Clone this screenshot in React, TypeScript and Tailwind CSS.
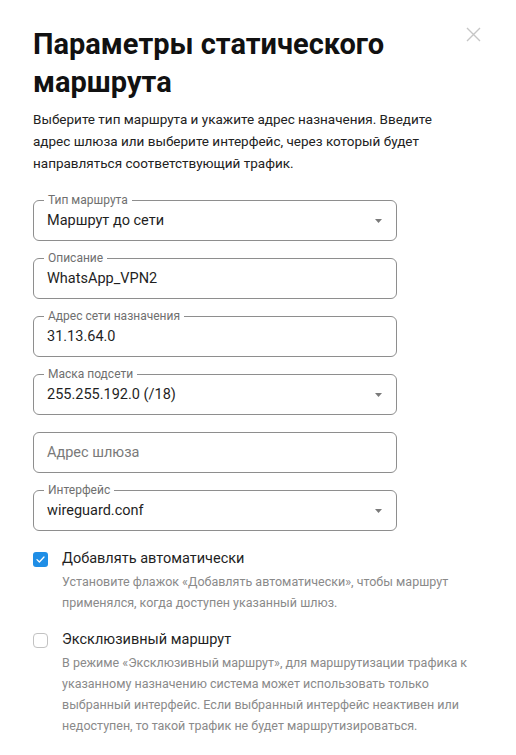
import React from "react";

type FieldProps = {
    label?: string;
    value?: string;
    placeholder?: string;
    select?: boolean;
};

function Field({ label, value, placeholder, select }: FieldProps) {
    return (
        <div className="relative flex h-[41px] w-[364px] items-center rounded-[6px] border border-[#8e8e8e] pl-[13px] pr-[12px]">
            {label && (
                <span className="absolute -top-[9px] left-[10px] bg-white px-[4px] text-[12px] leading-[16px] text-[#6f6f6f]">
                    {label}
                </span>
            )}
            <span className={"flex-1 text-[14.5px] " + (value ? "text-[#1f1f1f]" : "text-[#7a7a7a]")}>
                {value ?? placeholder}
            </span>
            {select && (
                <svg width="7" height="4" viewBox="0 0 7 4" className="mr-[2px]">
                    <path d="M0 0 L7 0 L3.5 4 Z" fill="#7a7a7a" />
                </svg>
            )}
        </div>
    );
}

function CheckRow({ checked, title, text }: { checked: boolean; title: string; text: string }) {
    return (
        <div className="flex flex-col">
            <div className="flex items-center gap-[14px]">
                {checked ? (
                    <span className="flex h-[15px] w-[15px] items-center justify-center rounded-[3px] bg-[#1f8ee6]">
                        <svg width="9" height="7" viewBox="0 0 9 7">
                            <path d="M1 3.6 L3.4 6 L8 1" fill="none" stroke="white" strokeWidth="1.3" strokeLinecap="round" strokeLinejoin="round" />
                        </svg>
                    </span>
                ) : (
                    <span className="h-[15px] w-[15px] rounded-[4px] border border-[#c2c2c2]" />
                )}
                <span className="text-[14.5px] leading-[22px] text-[#1f1f1f]">{title}</span>
            </div>
            <p className="ml-[29px] mt-[1px] text-[12.5px] leading-[21px] text-[#8a8a8a]">{text}</p>
        </div>
    );
}

export default function App() {
    return (
        <div className="relative min-h-[755px] w-[516px] bg-white px-[33px] pt-[25px] font-['Roboto',sans-serif]">
            {/* закрыть */}
            <button className="absolute right-[35px] top-[27px] p-0">
                <svg width="15" height="15" viewBox="0 0 15 15">
                    <path d="M1 1 L14 14 M14 1 L1 14" stroke="#c6c6c6" strokeWidth="1.4" />
                </svg>
            </button>

            <h1 className="text-[29px] font-bold leading-[38px] text-[#111]">
                Параметры статического
                <br />
                маршрута
            </h1>
            <p className="mt-[7px] max-w-[435px] text-[13.5px] leading-[22px] text-[#222]">
                Выберите тип маршрута и укажите адрес назначения. Введите адрес шлюза или выберите интерфейс, через который будет направляться соответствующий трафик.
            </p>

            <div className="mt-[26px] flex flex-col gap-[17px]">
                <Field label="Тип маршрута" value="Маршрут до сети" select />
                <Field label="Описание" value="WhatsApp_VPN2" />
                <Field label="Адрес сети назначения" value="31.13.64.0" />
                <Field label="Маска подсети" value="255.255.192.0 (/18)" select />
                <Field placeholder="Адрес шлюза" />
                <Field label="Интерфейс" value="wireguard.conf" select />
            </div>

            <div className="mt-[17px] flex flex-col gap-[16px]">
                <CheckRow
                    checked
                    title="Добавлять автоматически"
                    text="Установите флажок «Добавлять автоматически», чтобы маршрут применялся, когда доступен указанный шлюз."
                />
                <CheckRow
                    checked={false}
                    title="Эксклюзивный маршрут"
                    text="В режиме «Эксклюзивный маршрут», для маршрутизации трафика к указанному назначению система может использовать только выбранный интерфейс. Если выбранный интерфейс неактивен или недоступен, то такой трафик не будет маршрутизироваться."
                />
            </div>
        </div>
    );
}
